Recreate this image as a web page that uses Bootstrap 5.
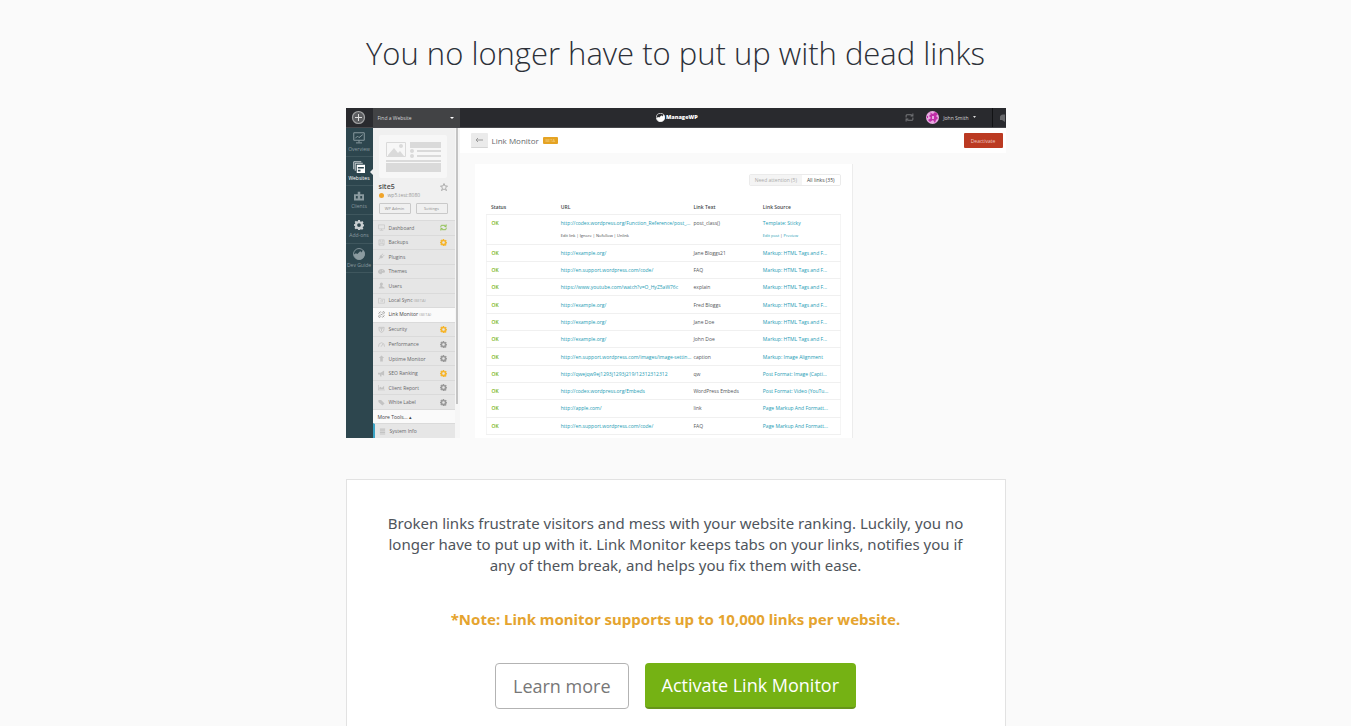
<!DOCTYPE html>
<html lang="en">
<head>
<meta charset="utf-8">
<meta name="viewport" content="width=device-width, initial-scale=1">
<title>Link Monitor</title>
<link href="https://cdn.jsdelivr.net/npm/bootstrap@5.3.0/dist/css/bootstrap.min.css" rel="stylesheet">
<style>
body{background:#fafafa;color:#4f555c;font-family:"Open Sans","Noto Sans",sans-serif;overflow-x:hidden}
a{text-decoration:none}
.page-wrap{max-width:660px}
.headline{font-size:31px;line-height:44px;font-weight:300;color:#2c3038;padding-top:31px;margin-bottom:33px}
/* product preview */
.preview{height:330px;font-size:5px;line-height:8px;overflow:hidden;color:#54575a}
.preview svg{display:block;flex:none}
.topbar{height:20px;background:#292a2e;border-bottom:1px solid #47484c;color:#d5d5d6}
.plus-box{width:27px;padding-right:2px}
.find-box{width:87px;height:19px;background:#424345;padding:0 6px 0 5px}
.bell-box{width:14px;border-left:1px solid #121315;padding-left:7px}
.caret{border:2px solid transparent;border-top-color:#fff;border-bottom:0}
.rail{width:27px;background:#2d464e}
.rail a{height:29px;color:#8b9ba0;border-bottom:1px solid #3f575e;padding-top:1px;gap:2px;line-height:7px}
.rail a.current{color:#fff}
.rail a.current::after{content:"";position:absolute;right:0;top:12px;border:3px solid transparent;border-right-color:#ededed;border-left:0}
.side{width:87px;background:#f0f0f0}
.side-track{width:5px;background:#f6f6f6}
.side-thumb{width:2px;height:276px;background:#c4c4c4;margin-left:1px}
.site-card{height:92px;padding:7px 7px 0 6px}
.site-name{font-size:7px;line-height:9px;font-weight:600;color:#4a4a4a}
.site-url{font-size:5px;color:#999}
.mini{background:transparent;border:1px solid #c9c9c9;border-radius:1px;color:#8c8c8c;font-size:4px;line-height:8px;height:11px;width:32px;padding:0}
.menu-item{background:#e6e6e6;border-top:1px solid #dadada;padding:0 8px 0 5px;color:#66686a;font-size:5px;gap:4px;min-height:0}
.menu-item>svg:first-child{color:#c3c3c3}
.menu-item small{font-size:4px;color:#aaa}
.menu-item.active-tool,.menu-item.more{background:#fafafa;color:#444}
.menu-item.sub{border-left:2px solid #3ba4c6;padding-left:4px}
.page-head{height:25px;background:#fff;padding:0 3px 0 11px;gap:4px}
.back-btn{width:17px;height:15px;background:#ebebeb;border:0;border-bottom:1px solid #d5d5d5;border-radius:1px;color:#999;padding:0 4px}
.page-name{font-size:8px;line-height:12px;font-weight:400;color:#66696c}
.beta{background:#e5a323;color:#f5d48f;font-size:4px;line-height:7px;border-radius:1px;width:15px}
.deactivate{background:#bb3a22;color:#eec8c0;border:0;border-radius:1px;font-size:5px;width:39px;height:15px;padding:0}
.sheet{margin:11px 153px 0 15px;background:#fff;border-right:1px solid #ececec;padding:10px 11px 0}
.seg{border:1px solid #ebebeb;border-radius:2px;overflow:hidden}
.seg button{border:0;font-size:5px;line-height:8px;padding:1px 5px;background:#fff;color:#444}
.seg button.off{background:#f4f4f4;color:#aaa}
.links{width:100%;height:235px;margin-top:14px;table-layout:fixed;border-collapse:collapse}
.links th{height:14px;font-weight:600;font-size:5px;color:#45484b;vertical-align:middle}
.links td,.links th{padding:0 0 0 5px;white-space:nowrap}
.links tbody tr{border-top:1px solid #f0f0f0}
.links tbody tr:first-child{height:30px}
.links tbody tr:last-child{border-bottom:1px solid #f0f0f0}
.links tbody{border-left:1px solid #f4f4f4;border-right:1px solid #f5f5f5}
.links a{color:#239bb4}
.links .ok{color:#76b310;font-weight:600}
.acts{font-size:4px;line-height:6px;padding-top:6px}
.acts.plain a{color:#45484b}
/* call to action */
.pitch{background:#fff;border:1px solid #e2e2e2;margin-top:41px;padding:33px 32px 60px}
.pitch p{font-family:"Noto Sans","Open Sans",sans-serif;font-size:15px;line-height:21px}
.pitch .note{color:#e5a42f;font-weight:700;margin:33px 0}
.act{font-size:18px;line-height:26px;padding:9px 17px;border-radius:4px;height:46px}
.act.learn{border:1px solid #b3b3b3;color:#777;background:#fff}
.act.go{border:0;border-bottom:2px solid #66951a;background:#75b214;color:#fff}
</style>
</head>
<body>
<svg width="0" height="0" class="position-absolute" aria-hidden="true">
<defs>
<symbol id="gear" viewBox="0 0 16 16"><path fill="currentColor" fill-rule="evenodd" d="M6.5 0h3l.4 2.200 1.500.6L13.200 1.600l2 2-1.200 1.900.6 1.400 1.400.4v2.600l-1.500.5-.6 1.400 1.100 1.900-2 2-1.800-1.100-1.400.6L9.500 16h-3l-.4-1.600-1.500-.6-1.800 1-2-2 1.100-1.900-.5-1.300L0 9.300V6.800l1.500-.5.600-1.400L1 3.300l2-2 1.700 1.200 1.400-.6zM8 5a3 3 0 1 0 0 6a3 3 0 0 0 0-6z"/></symbol>
<symbol id="sync" viewBox="0 0 16 16"><g fill="none" stroke="currentColor" stroke-width="1.800"><path d="M2 8V4.500Q2 3 4 3h6q2 0 3 2M14 8v3.500q0 1.500-2 1.500H6q-2 0-3-2"/><path d="M14 1v4.500h-4M2 15v-4.500h4"/></g></symbol>
<symbol id="monitor" viewBox="0 0 16 16"><g fill="none" stroke="currentColor" stroke-width="1.500"><path d="M1 2h14v9H1zM8 11v3M4 14.500h8"/></g></symbol>
<symbol id="graph" viewBox="0 0 16 16"><g fill="none" stroke="currentColor" stroke-width="1.300"><path d="M1 1h14v10H1zM8 11v3M4 14.500h8M3 8.500l3-3 2 2 5-4"/></g></symbol>
<symbol id="pages" viewBox="0 0 16 16"><path fill="none" stroke="currentColor" d="M1 11V1h10M3 13V3h10"/><path fill="currentColor" fill-rule="evenodd" d="M5 5h11v11H5zm1.500 3v2h8V8zm0 3.500V14H10v-2.500z"/></symbol>
<symbol id="clients" viewBox="0 0 16 16"><path fill="currentColor" fill-rule="evenodd" d="M6 1h4v4h6v10H0V5h6zM3 8v4h3V8zm7 0v4h3V8z"/></symbol>
<symbol id="floppy" viewBox="0 0 16 16"><path fill="none" stroke="currentColor" stroke-width="1.500" d="M2 2h12v12H2zM5 2v5h6V2M4 14v-4h8v4"/></symbol>
<symbol id="plug" viewBox="0 0 16 16"><path fill="currentColor" d="M1 14l3-3q-1-4 2-6l1-1 5 5-1 1q-2 3-6 2l-3 3zM8 4l3-3 1 1-3 3zM11 7l3-3 1 1-3 3z"/></symbol>
<symbol id="palette" viewBox="0 0 16 16"><path fill="currentColor" fill-rule="evenodd" d="M8 2c4 0 8 2 8 6s-4 3-6 3 0 4-4 3S0 11 0 8s4-6 8-6zM4 6v2h2V6zm5-1v2h2V5z"/></symbol>
<symbol id="person" viewBox="0 0 16 16"><path fill="currentColor" d="M8 1q4 0 3 5l-2 3 6 4v2H2v-2l4-4-2-3Q4 1 8 1z"/></symbol>
<symbol id="folder" viewBox="0 0 16 16"><path fill="none" stroke="currentColor" stroke-width="1.500" d="M1 3h5l1 2h8v9H1zM5 9h6M9 7l2 2-2 2"/></symbol>
<symbol id="chain" viewBox="0 0 16 16"><g fill="none" stroke="#777" stroke-width="1.500"><path d="M9 4l2-2q2-1 3 0t0 3l-3 3M7 12l-2 2q-2 1-3 0t0-3l3-3M6 10l4-4M2 2l3 3M11 11l3 3M6 1v2M1 6h2M10 15v-2M15 10h-2"/></g></symbol>
<symbol id="shield" viewBox="0 0 16 16"><path fill="none" stroke="currentColor" stroke-width="2" d="M2 3h12l-1 8-5 4-5-4zM5 6h6M8 6v6"/></symbol>
<symbol id="gauge" viewBox="0 0 16 16"><path fill="none" stroke="currentColor" stroke-width="1.800" d="M1 13Q1 4 8 4t7 9M7 13l4-6"/></symbol>
<symbol id="uparrow" viewBox="0 0 16 16"><path fill="currentColor" d="M8 1l6 6h-3v8H5V7H2z"/></symbol>
<symbol id="horn" viewBox="0 0 16 16"><path fill="currentColor" d="M14 1v12l-6-3v5H5l-1-5H0V6h6z"/></symbol>
<symbol id="chart" viewBox="0 0 16 16"><path fill="currentColor" d="M0 2h1.500v11H16v1.500H0zM3 12V8l3-2 3 3 5-5v8z"/></symbol>
<symbol id="tag" viewBox="0 0 16 16"><path fill="currentColor" d="M1 2h6l8 8-5 5-9-8z"/></symbol>
<symbol id="rows" viewBox="0 0 16 16"><path fill="currentColor" d="M2 1h12v3H2zM2 5h12v3H2zM2 9h12v3H2zM2 13h12v2H2z"/></symbol>
<symbol id="peak" viewBox="0 0 16 16"><circle cx="8" cy="8" r="7.300" fill="none" stroke="currentColor" stroke-width="1.200"/><path fill="currentColor" d="M.8 9l3-2 2 1 4-4 1 2 3-3a7.500 7.500 0 1 1-13 6z"/></symbol>
</defs>
</svg>

<main class="page-wrap w-100 mx-auto">
<h1 class="headline text-center">You no longer have to put up with dead links</h1>

<section class="preview d-flex flex-column" aria-label="Link Monitor preview">
  <header class="topbar d-flex align-items-center flex-shrink-0">
    <div class="plus-box d-flex justify-content-center">
      <svg width="15" height="15" viewBox="0 0 15 15"><circle cx="7.500" cy="7.500" r="6" fill="#5c5d60" stroke="#a2a3a4" stroke-width="1.200"/><path d="M4 7.500h7M7.500 4v7" stroke="#ddd"/></svg>
    </div>
    <div class="find-box d-flex align-items-center justify-content-between"><span>Find a Website</span><span class="caret"></span></div>
    <div class="flex-fill d-flex align-items-center align-self-stretch">
      <div class="w-25"></div>
      <div class="flex-fill d-flex align-items-center ps-5"><span class="ps-2"></span>
        <svg width="50" height="12" viewBox="0 0 50 12" class="text-white"><use href="#peak" x="4" y="1" width="9" height="9"/><text x="14" y="7" font-size="5.500" font-weight="800" fill="#fff">ManageWP</text></svg>
      </div>
      <div class="d-flex align-items-center gap-1">
        <svg width="9" height="9" style="color:#77787b"><use href="#sync"/></svg>
        <svg class="ms-2" width="13" height="13" viewBox="0 0 13 13"><circle cx="6.500" cy="6.500" r="6.500" fill="#e9a9e2"/><path d="M3 1l2 2-2 2 2 2-3 2 2 2 3-2 2 3 1-3 2-2-2-2 2-2-3-2-2 2zM6 5h2v3H6zM1 5h1v2H1z" fill="#c02fa8"/></svg>
        <span>John Smith</span><svg width="3" height="3" viewBox="0 0 3 3" class="me-3"><path d="M0 0h3L1.500 2z" fill="#ddd"/></svg>
      </div>
      <div class="bell-box flex-shrink-0 align-self-stretch d-flex align-items-center"><svg width="5" height="8" viewBox="0 0 5 8"><path d="M0 6V3q0-2 3-2.500h2V6zM2 6h3v2z" fill="#68696c"/></svg></div>
    </div>
  </header>

  <div class="d-flex flex-fill overflow-hidden">
    <nav class="rail flex-shrink-0">
      <a href="#" class="d-flex flex-column align-items-center justify-content-center"><svg width="12" height="12"><use href="#graph"/></svg>Overview</a>
      <a href="#" class="current position-relative d-flex flex-column align-items-center justify-content-center"><svg width="12" height="12"><use href="#pages"/></svg>Websites</a>
      <a href="#" class="d-flex flex-column align-items-center justify-content-center"><svg width="10" height="10"><use href="#clients"/></svg>Clients</a>
      <a href="#" class="d-flex flex-column align-items-center justify-content-center"><svg width="10" height="10" style="color:#c9cfd1"><use href="#gear"/></svg>Add-ons</a>
      <a href="#" class="d-flex flex-column align-items-center justify-content-center"><svg width="12" height="12"><use href="#peak"/></svg>Dev Guide</a>
    </nav>

    <aside class="side d-flex flex-shrink-0">
      <div class="flex-fill d-flex flex-column">
        <div class="site-card">
          <svg width="69" height="43" viewBox="0 0 69 43"><rect width="68" height="43" rx="2" fill="#f7f7f7"/><g fill="#dadada"><path d="M31 7h31v6H31zM38 15h24v2H38zM38 20h24v2H38zM7 25h55v2H7zM7 28h55v9H7z"/><circle cx="33" cy="16" r="2"/><circle cx="33" cy="21" r="2"/><path d="M9 20l6-7 4 5 2-2 4 5H9z"/><circle cx="22" cy="11" r="2"/></g><path d="M7.500 7.500h19v14h-19z" fill="none" stroke="#dadada"/></svg>
          <div class="d-flex justify-content-between align-items-center mt-1"><span class="site-name">site5</span><svg width="8" height="8" viewBox="0 0 16 16"><path d="M8 1l2 5h5l-4 4 2 5-5-3-5 3 2-5-4-4h5z" fill="none" stroke="#999" stroke-width="1.500"/></svg></div>
          <div class="site-url d-flex align-items-center"><svg width="5" height="5" class="me-1" viewBox="0 0 5 5"><circle cx="2.500" cy="2.500" r="2.500" fill="#f0a42a"/></svg><span>wp5.test:8080</span></div>
          <div class="d-flex justify-content-between pt-1"><button class="mini">WP Admin</button><button class="mini">Settings</button></div>
        </div>
        <nav class="flex-fill d-flex flex-column" id="tools"></nav>
      </div>
      <div class="side-track"><div class="side-thumb"></div></div>
    </aside>

    <div class="flex-fill d-flex flex-column">
      <div class="page-head d-flex align-items-center flex-shrink-0">
        <button class="back-btn" aria-label="Back"><svg width="8" height="6" viewBox="0 0 8 6"><path d="M8 3H1M3 1L1 3l2 2" fill="none" stroke="#999"/></svg></button>
        <h2 class="page-name m-0">Link Monitor</h2><span class="beta text-center">BETA</span>
        <button class="deactivate ms-auto">Deactivate</button>
      </div>
      <div class="sheet flex-fill">
        <div class="d-flex justify-content-end"><div class="seg d-flex"><button class="off">Need attention (5)</button><button>All links (35)</button></div></div>
        <table class="links">
          <colgroup><col style="width:19.700%"><col style="width:37.500%"><col style="width:19.600%"><col></colgroup>
          <thead><tr><th scope="col">Status</th><th scope="col">URL</th><th scope="col">Link Text</th><th scope="col">Link Source</th></tr></thead>
          <tbody id="rowsBody"></tbody>
        </table>
      </div>
    </div>
  </div>
</section>

<section class="pitch text-center">
  <p class="mb-0">Broken links frustrate visitors and mess with your website ranking. Luckily, you no longer have to put up with it. Link Monitor keeps tabs on your links, notifies you if any of them break, and helps you fix them with ease.</p>
  <p class="note">*Note: Link monitor supports up to 10,000 links per website.</p>
  <div class="d-flex flex-wrap justify-content-center gap-3"><button class="act learn">Learn more</button><button class="act go">Activate Link Monitor</button></div>
</section>
</main>
<script src="https://cdn.jsdelivr.net/npm/bootstrap@5.3.0/dist/js/bootstrap.bundle.min.js"></script>
<script>
const tools=[["monitor","Dashboard","sync","#7bb92f"],["floppy","Backups","gear","#f6b52c"],["plug","Plugins"],["palette","Themes"],["person","Users"],["folder","Local Sync <small>(BETA)</small>"],["chain","Link Monitor <small>(BETA)</small>"],["shield","Security","gear","#f6b52c"],["gauge","Performance","gear","#999"],["uparrow","Uptime Monitor","gear","#999"],["horn","SEO Ranking","gear","#f6b52c"],["chart","Client Report","gear","#999"],["tag","White Label","gear","#999"],["","More Tools... <span>&#9652;</span>"],["rows","System Info"]];
document.getElementById("tools").innerHTML=tools.map(([icon,label,mark,tint],i)=>
  `<a href="#" class="menu-item d-flex align-items-center ${i===6?"active-tool":i===13?"more":i===14?"sub":""}" style="flex:1 1 0">${icon?`<svg width="7" height="7"><use href="#${icon}"/></svg>`:""}<span>${label}</span>${mark?`<svg class="ms-auto" width="7" height="7" style="color:${tint}"><use href="#${mark}"/></svg>`:""}</a>`).join("");
const tags="Markup: HTML Tags and F...";
const links=[["http://codex.wordpress.org/Function_Reference/post_...","post_class()","Template: Sticky"],["http://example.org/","Jane Bloggs21",tags],["http://en.support.wordpress.com/code/","FAQ",tags],["https://www.youtube.com/watch?v=O_HyZ5aW76c","explain",tags],["http://example.org/","Fred Bloggs",tags],["http://example.org/","Jane Doe",tags],["http://example.org/","John Doe",tags],["http://en.support.wordpress.com/images/image-settin...","caption","Markup: Image Alignment"],["http://qwejqw9ej1293j1293j219/12312312312","qw","Post Format: Image (Capti..."],["http://codex.wordpress.org/Embeds","WordPress Embeds","Post Format: Video (YouTu..."],["http://apple.com/","link","Page Markup And Formatt..."],["http://en.support.wordpress.com/code/","FAQ","Page Markup And Formatt..."]];
document.getElementById("rowsBody").innerHTML=links.map(([u,t,s],i)=>{
  const v=i?"align-middle":"align-top pt-1";
  return `<tr><td class="ok ${v}">OK</td><td class="${v}"><a href="#">${u}</a>${i?"":'<div class="acts plain"><a href="#">Edit link</a> | <a href="#">Ignore</a> | <a href="#">Nofollow</a> | <a href="#">Unlink</a></div>'}</td><td class="${v}">${t}</td><td class="${v}"><a href="#">${s}</a>${i?"":'<div class="acts"><a href="#">Edit post</a> | <a href="#">Preview</a></div>'}</td></tr>`}).join("");
</script>
</body>
</html>
